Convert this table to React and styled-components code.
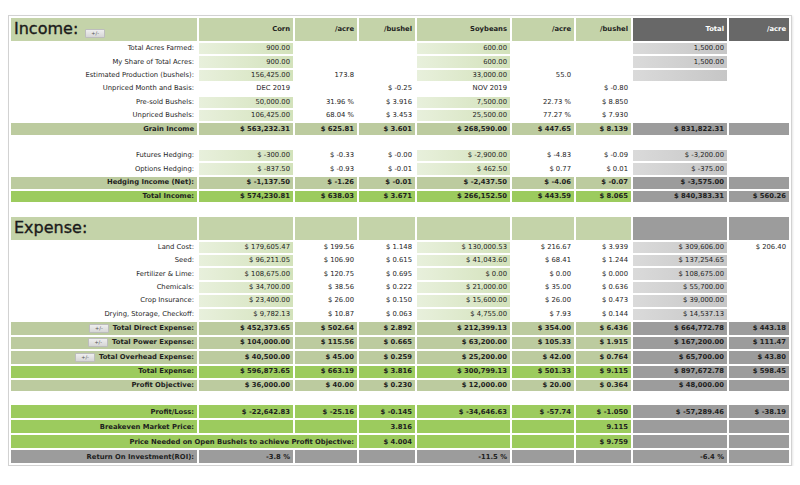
import React from 'react'
import styled, { createGlobalStyle } from 'styled-components'

const GlobalStyle = createGlobalStyle`
  body {
    margin: 0;
    background: #fff;
    font-family: "DejaVu Sans", Verdana, sans-serif;
  }
`

const Page = styled.div`
  padding: 15px 8px 0;
`

const Frame = styled.div`
  width: 784px;
  box-sizing: border-box;
  border: 1px solid #d2d2d2;
  box-shadow: 1px 1px 2px rgba(0, 0, 0, 0.1);
`

const Sheet = styled.table`
  width: 782px;
  table-layout: fixed;
  border-collapse: separate;
  border-spacing: 2px;
  font-size: 6.8px;
`

const tones = {
  none: 'transparent',
  head: '#c4d3a9',
  light: 'linear-gradient(to right, #e8f0dc, #d3e2bb)',
  silver: 'linear-gradient(to right, #dadada, #c6c6c6)',
  olive: '#bccb9f',
  lime: '#9ccb5e',
  gray: '#9c9c9c',
  dark: '#686868',
}

const Cell = styled.td`
  background: ${p => tones[p.$tone || 'none']};
  height: ${p => p.$h}px;
  padding: 0 3px;
  text-align: ${p => p.$align || 'right'};
  vertical-align: middle;
  font-weight: ${p => (p.$bold ? 'bold' : 'normal')};
  color: ${p => (p.$tone === 'dark' ? '#fff' : '#1e1e1e')};
  white-space: nowrap;
  overflow: hidden;
  line-height: 1;
`

const Title = styled.span`
  font-size: 16px;
  color: #1a1a1a;
  -webkit-text-stroke: 0.35px #1a1a1a;
`

const Toggle = styled.span`
  display: inline-block;
  height: 7px;
  line-height: 7px;
  padding: 0 5px;
  margin: ${p => (p.$title ? '0 0 0 7px' : '0 4px 0 0')};
  font-size: 5px;
  font-weight: normal;
  color: #555;
  background: linear-gradient(#eeeeee, #d6d6d6);
  border: 1px solid #bdbdbd;
  border-radius: 1px;
  vertical-align: ${p => (p.$title ? '-1px' : 'middle')};
`

const widths = [186, 94, 62, 56, 93, 62, 55, 94, 60]

const heights = { head: 23, plain: 11.4, sub: 11.9, lime: 11.9, obj: 11.9, roi: 11.9 }

const rows = [
  { kind: 'head', title: 'Income:', toggle: true, labels: ['Corn', '/acre', '/bushel', 'Soybeans', '/acre', '/bushel', 'Total', '/acre'], dark: true },
  { kind: 'plain', label: 'Total Acres Farmed:', total: true, v: ['900.00', '', '', '600.00', '', '', '1,500.00', ''] },
  { kind: 'plain', label: 'My Share of Total Acres:', total: true, v: ['900.00', '', '', '600.00', '', '', '1,500.00', ''] },
  { kind: 'plain', label: 'Estimated Production (bushels):', total: true, v: ['156,425.00', '173.8', '', '33,000.00', '55.0', '', '', ''] },
  { kind: 'plain', label: 'Unpriced Month and Basis:', bare: true, v: ['DEC 2019', '', '$ -0.25', 'NOV 2019', '', '$ -0.80', '', ''] },
  { kind: 'plain', label: 'Pre-sold Bushels:', v: ['50,000.00', '31.96 %', '$ 3.916', '7,500.00', '22.73 %', '$ 8.850', '', ''] },
  { kind: 'plain', label: 'Unpriced Bushels:', v: ['106,425.00', '68.04 %', '$ 3.453', '25,500.00', '77.27 %', '$ 7.930', '', ''] },
  { kind: 'sub', label: 'Grain Income', v: ['$ 563,232.31', '$ 625.81', '$ 3.601', '$ 268,590.00', '$ 447.65', '$ 8.139', '$ 831,822.31', ''] },
  { kind: 'gap', h: 10.6 },
  { kind: 'plain', label: 'Futures Hedging:', total: true, v: ['$ -300.00', '$ -0.33', '$ -0.00', '$ -2,900.00', '$ -4.83', '$ -0.09', '$ -3,200.00', ''] },
  { kind: 'plain', label: 'Options Hedging:', total: true, v: ['$ -837.50', '$ -0.93', '$ -0.01', '$ 462.50', '$ 0.77', '$ 0.01', '$ -375.00', ''] },
  { kind: 'sub', label: 'Hedging Income (Net):', v: ['$ -1,137.50', '$ -1.26', '$ -0.01', '$ -2,437.50', '$ -4.06', '$ -0.07', '$ -3,575.00', ''] },
  { kind: 'lime', label: 'Total Income:', v: ['$ 574,230.81', '$ 638.03', '$ 3.671', '$ 266,152.50', '$ 443.59', '$ 8.065', '$ 840,383.31', '$ 560.26'] },
  { kind: 'gap', h: 10.2 },
  { kind: 'head', title: 'Expense:', labels: ['', '', '', '', '', '', '', ''] },
  { kind: 'plain', label: 'Land Cost:', total: true, v: ['$ 179,605.47', '$ 199.56', '$ 1.148', '$ 130,000.53', '$ 216.67', '$ 3.939', '$ 309,606.00', '$ 206.40'] },
  { kind: 'plain', label: 'Seed:', total: true, v: ['$ 96,211.05', '$ 106.90', '$ 0.615', '$ 41,043.60', '$ 68.41', '$ 1.244', '$ 137,254.65', ''] },
  { kind: 'plain', label: 'Fertilizer & Lime:', total: true, v: ['$ 108,675.00', '$ 120.75', '$ 0.695', '$ 0.00', '$ 0.00', '$ 0.000', '$ 108,675.00', ''] },
  { kind: 'plain', label: 'Chemicals:', total: true, v: ['$ 34,700.00', '$ 38.56', '$ 0.222', '$ 21,000.00', '$ 35.00', '$ 0.636', '$ 55,700.00', ''] },
  { kind: 'plain', label: 'Crop Insurance:', total: true, v: ['$ 23,400.00', '$ 26.00', '$ 0.150', '$ 15,600.00', '$ 26.00', '$ 0.473', '$ 39,000.00', ''] },
  { kind: 'plain', label: 'Drying, Storage, Checkoff:', total: true, v: ['$ 9,782.13', '$ 10.87', '$ 0.063', '$ 4,755.00', '$ 7.93', '$ 0.144', '$ 14,537.13', ''] },
  { kind: 'sub', toggle: true, label: 'Total Direct Expense:', v: ['$ 452,373.65', '$ 502.64', '$ 2.892', '$ 212,399.13', '$ 354.00', '$ 6.436', '$ 664,772.78', '$ 443.18'] },
  { kind: 'sub', toggle: true, label: 'Total Power Expense:', v: ['$ 104,000.00', '$ 115.56', '$ 0.665', '$ 63,200.00', '$ 105.33', '$ 1.915', '$ 167,200.00', '$ 111.47'] },
  { kind: 'sub', toggle: true, label: 'Total Overhead Expense:', v: ['$ 40,500.00', '$ 45.00', '$ 0.259', '$ 25,200.00', '$ 42.00', '$ 0.764', '$ 65,700.00', '$ 43.80'] },
  { kind: 'lime', label: 'Total Expense:', v: ['$ 596,873.65', '$ 663.19', '$ 3.816', '$ 300,799.13', '$ 501.33', '$ 9.115', '$ 897,672.78', '$ 598.45'] },
  { kind: 'obj', label: 'Profit Objective:', v: ['$ 36,000.00', '$ 40.00', '$ 0.230', '$ 12,000.00', '$ 20.00', '$ 0.364', '$ 48,000.00', ''] },
  { kind: 'gap', h: 10 },
  { kind: 'lime', h: 13, label: 'Profit/Loss:', v: ['$ -22,642.83', '$ -25.16', '$ -0.145', '$ -34,646.63', '$ -57.74', '$ -1.050', '$ -57,289.46', '$ -38.19'] },
  { kind: 'lime', h: 13, label: 'Breakeven Market Price:', v: ['', '', '3.816', '', '', '9.115', '', ''] },
  { kind: 'lime', h: 13, span: 3, label: 'Price Needed on Open Bushels to achieve Profit Objective:', v: ['', '', '$ 4.004', '', '', '$ 9.759', '', ''] },
  { kind: 'roi', h: 13, label: 'Return On Investment(ROI):', v: ['-3.8 %', '', '', '-11.5 %', '', '', '-6.4 %', ''] },
]

const labelTone = { plain: 'none', sub: 'olive', obj: 'olive', lime: 'lime', roi: 'gray' }

const toneFor = (row, i) => {
  if (row.kind === 'plain') {
    if (i === 0 || i === 3) return row.bare ? 'none' : 'light'
    if (i === 6) return row.total ? 'silver' : 'none'
    return 'none'
  }
  if (row.kind === 'roi') return 'gray'
  if (i >= 6) return 'gray'
  return row.kind === 'lime' ? 'lime' : 'olive'
}

const HeadRow = ({ row }) => (
  <tr>
    <Cell $h={heights.head} $tone="head" $align="left">
      <Title>{row.title}</Title>
      {row.toggle && <Toggle $title>+/-</Toggle>}
    </Cell>
    {row.labels.map((t, i) => (
      <Cell key={i} $h={heights.head} $bold $tone={i >= 6 ? (row.dark ? 'dark' : 'gray') : 'head'}>
        {t}
      </Cell>
    ))}
  </tr>
)

const DataRow = ({ row }) => {
  const h = row.h || (row.toggle ? 12.6 : heights[row.kind])
  const bold = row.kind !== 'plain'
  const skip = row.span ? row.span - 1 : 0
  return (
    <tr>
      <Cell $h={h} colSpan={row.span || 1} $bold={bold} $tone={labelTone[row.kind]}>
        {row.toggle && <Toggle>+/-</Toggle>}
        {row.label}
      </Cell>
      {row.v.slice(skip).map((val, k) => {
        const i = k + skip
        return (
          <Cell key={i} $h={h} $bold={bold} $tone={toneFor(row, i)}>
            {val}
          </Cell>
        )
      })}
    </tr>
  )
}

const App = () => (
  <Page>
    <GlobalStyle />
    <Frame>
      <Sheet>
        <colgroup>
          {widths.map((w, i) => (
            <col key={i} style={{ width: w }} />
          ))}
        </colgroup>
        <tbody>
          {rows.map((row, i) => {
            if (row.kind === 'head') return <HeadRow key={i} row={row} />
            if (row.kind === 'gap')
              return (
                <tr key={i}>
                  <Cell $h={row.h} colSpan={9} />
                </tr>
              )
            return <DataRow key={i} row={row} />
          })}
        </tbody>
      </Sheet>
    </Frame>
  </Page>
)

export default App
